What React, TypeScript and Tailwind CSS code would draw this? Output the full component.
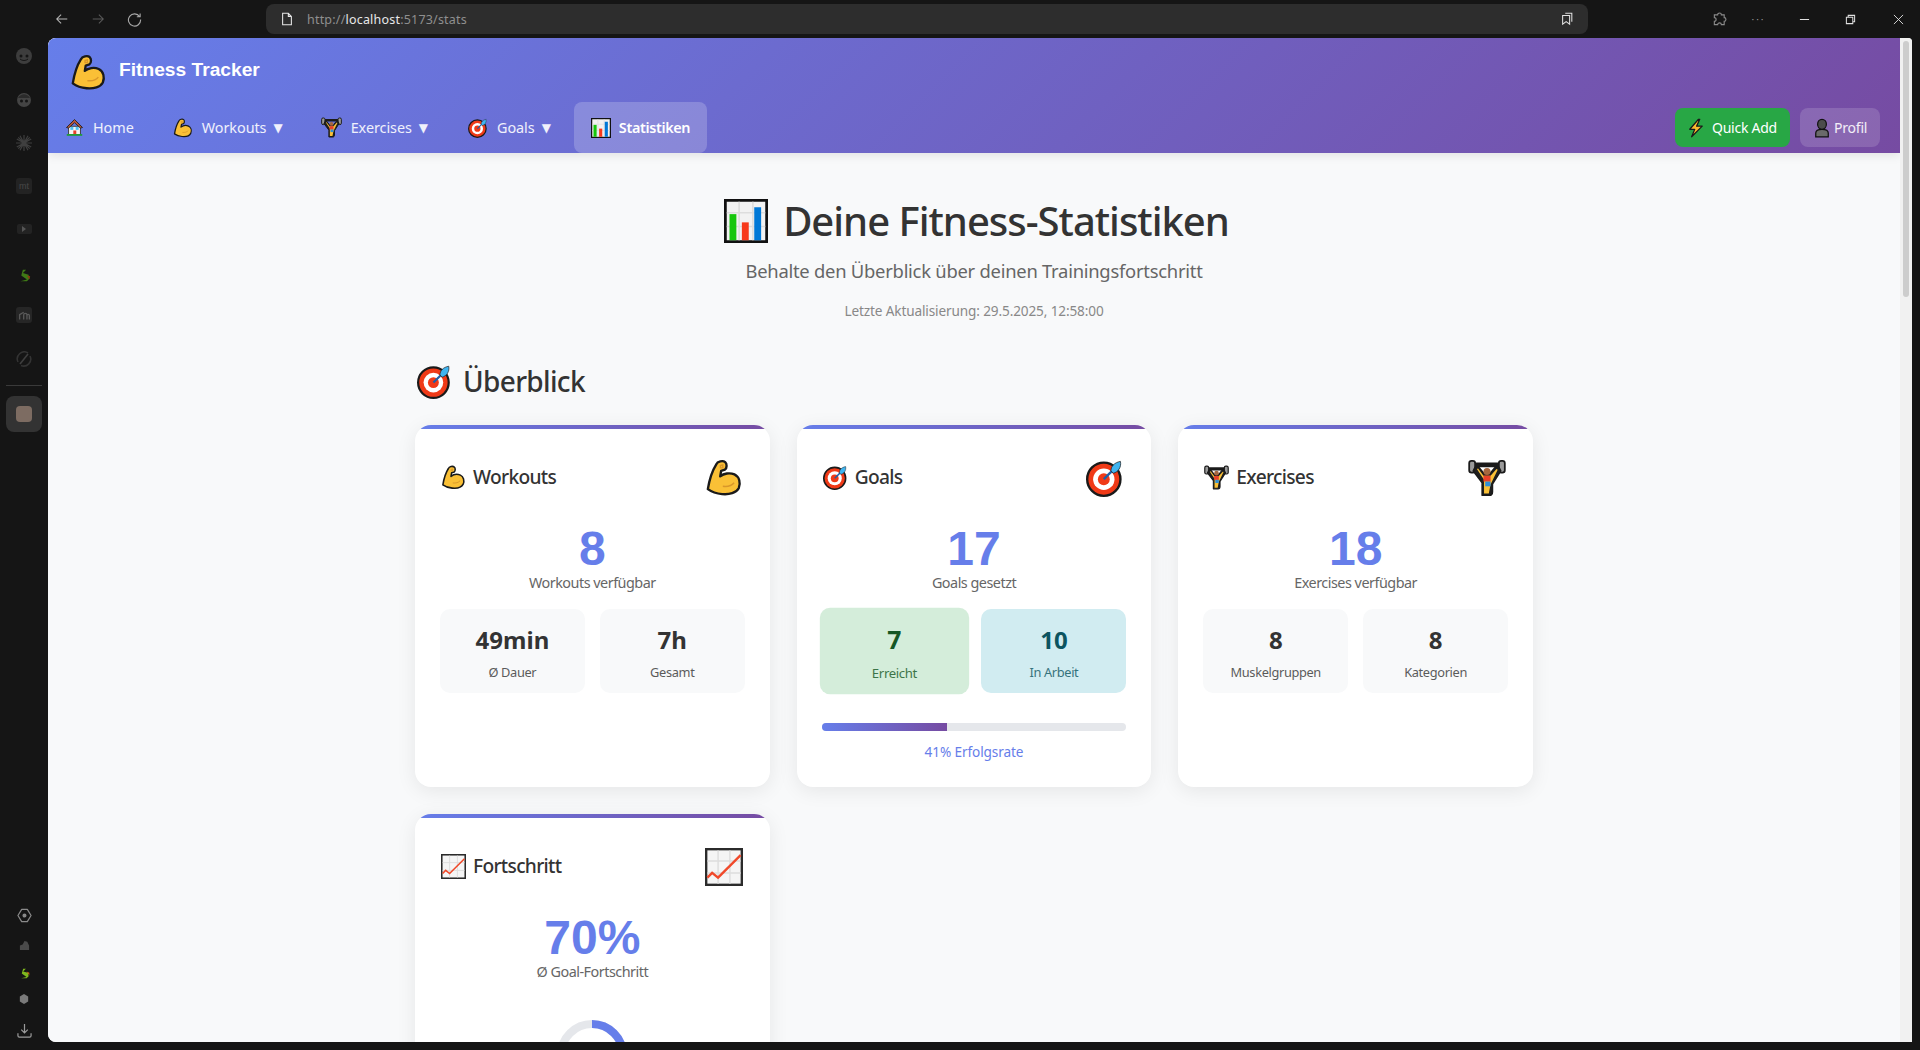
import type { ReactNode } from 'react';

const UI_FONT = "font-['Noto_Sans',sans-serif]";
const NUM_FONT = "font-['Liberation_Sans',Arial,sans-serif]";

/* ---------- emoji, drawn because no colour emoji font is available ---------- */

function Muscle({ className }: { className: string }) {
  return (
    <svg viewBox="0 0 32 32" className={className}>
      <path
        d="M9.500 4.500C10.500 2 15 1 17 2.600c1.600 1.400 1.600 5-.2 6.400l-3.200 1-.8 4.600c3-2.400 8-3.400 12-1.600 4.200 2 5.400 7.200 3.600 11.600-2 4-8 5.600-14 5-4.600-.4-9-2-12-4.200C3.600 18 6 10 9.500 4.500Z"
        fill="#fac036"
        stroke="#1a1a1a"
        strokeWidth="2"
        strokeLinejoin="round"
      />
      <path d="M13 5.500l2-.5v2.500h-2zM15 23c4 .5 7.500-.5 9.500-3" fill="none" stroke="#d9972a" strokeWidth="1.200" />
    </svg>
  );
}

function Target({ className }: { className: string }) {
  return (
    <svg viewBox="0 0 32 32" className={className}>
      <circle cx="15" cy="17" r="14" fill="#f03a17" stroke="#1a1a1a" strokeWidth="2" />
      <circle cx="15" cy="17" r="9" fill="#fff" />
      <circle cx="15" cy="17" r="5" fill="#f03a17" />
      <path d="M15 17 25 7" stroke="#1d5fa8" strokeWidth="2" />
      <path d="M21 10c0-4 3-7 8-8 1 5-2 9-6 10z" fill="#3fb4f0" stroke="#1a1a1a" strokeWidth=".6" />
    </svg>
  );
}

function Lifter({ className }: { className: string }) {
  return (
    <svg viewBox="0 0 32 32" className={className}>
      <path d="M4 5h24" stroke="#1a1a1a" strokeWidth="4" />
      <rect x="1" y="1.500" width="5" height="10" rx="2" fill="#9a9a9a" stroke="#1a1a1a" strokeWidth="1.500" />
      <rect x="26" y="1.500" width="5" height="10" rx="2" fill="#9a9a9a" stroke="#1a1a1a" strokeWidth="1.500" />
      <path d="M6 7 4.500 10 12 20v10.500h6c2 0 2.500-1.500 2.500-3V21L27.500 10 26 7l-3 0-4.500 5.500h-5L9 7z" fill="#1f1f1f" stroke="#1a1a1a" strokeWidth="1.500" strokeLinejoin="round" />
      <path d="M7.500 8.500 13.500 17.500v11.500h4l1.500-7.500L25 9l-1 -.5-5 5.500h-6L8.500 8z" fill="#fac036" />
      <circle cx="16" cy="10.500" r="3" fill="#a5673f" />
      <rect x="13" y="14" width="6" height="5" fill="#e8402a" />
      <rect x="14.500" y="19" width="4.500" height="4" fill="#2f8fd8" />
    </svg>
  );
}

function BarChart({ className }: { className: string }) {
  return (
    <svg viewBox="0 0 32 32" className={className}>
      <rect x="1" y="1" width="30" height="30" fill="#f2f2f2" stroke="#111" strokeWidth="2" />
      <path d="M2 10h28M2 20h28M11 2v28M21 2v28" stroke="#ddd" strokeWidth="1.200" />
      <rect x="4" y="11" width="5" height="19" fill="#16c60c" />
      <rect x="13" y="17" width="5" height="13" fill="#f7391b" />
      <rect x="22" y="6" width="5" height="24" fill="#0078d7" />
    </svg>
  );
}

function TrendChart({ className }: { className: string }) {
  return (
    <svg viewBox="0 0 32 32" className={className}>
      <rect x="1" y="1" width="30" height="30" fill="#f5f5f5" stroke="#2b2b2b" strokeWidth="2" />
      <path d="M2 11h28M2 21h28M11 2v28M21 2v28" stroke="#ddd" strokeWidth="1.200" />
      <path d="M2 25l4-4 5 4L30 6" fill="none" stroke="#f0492a" strokeWidth="2" />
    </svg>
  );
}

function House({ className }: { className: string }) {
  return (
    <svg viewBox="0 0 32 32" className={className}>
      <path d="M6 14h20v14H6z" fill="#f4f4f4" stroke="#333" strokeWidth="1.500" />
      <path d="M2.500 16 16 2.500 29.500 16 26 17 16 8 6 17z" fill="#b5533c" stroke="#222" strokeWidth="1.500" strokeLinejoin="round" />
      <rect x="9" y="15" width="5" height="5" fill="#4fc3f7" />
      <rect x="18" y="15" width="5" height="5" fill="#4fc3f7" />
      <rect x="14" y="21" width="5" height="7" fill="#e8402a" />
      <rect x="3" y="27" width="26" height="3" fill="#1f9e3a" />
    </svg>
  );
}

function Bolt({ className }: { className: string }) {
  return (
    <svg viewBox="0 0 32 32" className={className}>
      <path d="M20 2 6 18h8L9 30l17-17h-9l5-11z" fill="#fdb92e" stroke="#1a1a1a" strokeWidth="2" strokeLinejoin="round" />
    </svg>
  );
}

function Person({ className }: { className: string }) {
  return (
    <svg viewBox="0 0 32 32" className={className}>
      <path d="M6 30v-6c0-4 4-6 10-6s10 2 10 6v6z" fill="#6a6a6a" stroke="#111" strokeWidth="2" />
      <ellipse cx="16" cy="10" rx="7" ry="8" fill="#4c4c4c" stroke="#111" strokeWidth="2" />
    </svg>
  );
}

/* ---------- browser chrome ---------- */

function Sidebar() {
  return (
    <div className="w-12 shrink-0 flex flex-col items-center">
      <div className="flex flex-col items-center text-[#4a4a4a] pt-[10px]">
        <svg viewBox="0 0 16 16" className="w-4 h-4 mb-[28px]">
          <circle cx="8" cy="8" r="8" fill="#3d3d3d" />
          <circle cx="5" cy="8" r="1.500" fill="#151515" />
          <circle cx="11" cy="8" r="1.500" fill="#151515" />
          <path d="M4 11c2 2 6 2 8 0" stroke="#151515" fill="none" />
        </svg>
        <svg viewBox="0 0 16 16" className="w-4 h-4 mb-[27px]">
          <circle cx="8" cy="8" r="7" fill="#444" />
          <path d="M2 6c3-5 9-5 12 0z" fill="#2b2b2b" />
          <circle cx="5.500" cy="9" r="1.500" fill="#151515" />
          <circle cx="10.500" cy="9" r="1.500" fill="#151515" />
        </svg>
        <svg viewBox="0 0 16 16" className="w-4 h-4 mb-[27px]" stroke="#3f3f3f" strokeWidth="1.200">
          <path d="M8 0v16M0 8h16M2.300 2.300l11.400 11.400M13.700 2.300 2.300 13.700M4 .8l8 14.400M12 .8 4 15.200M.8 4l14.400 8M15.200 4 .8 12" />
        </svg>
        <div className="w-4 h-4 mb-[30px] rounded-[3px] bg-[#232323] text-[9px] leading-4 text-center text-[#484848] font-['Liberation_Sans',sans-serif]">
          mt
        </div>
        <div className="w-[15px] h-[10px] mb-[35px] rounded-[2px] bg-[#232323] flex items-center justify-center">
          <div className="border-l-[4px] border-y-[3px] border-l-[#555] border-y-transparent" />
        </div>
        <svg viewBox="0 0 16 16" className="w-[13px] h-[13px] mb-[25px]">
          <path d="M6 1h4L6 5l7 2 1 5-3 3H3l8-2-7-5z" fill="#3f7a16" />
          <path d="M11 8l4 1-1 4z" fill="#8a3a14" />
        </svg>
        <div className="w-4 h-4 mb-[28px] rounded-[3px] bg-[#262626] flex items-center justify-center">
          <svg viewBox="0 0 16 16" className="w-[13px] h-[13px]" fill="none" stroke="#595959" strokeWidth="1.600">
            <path d="M2 13V7l5-3M7 13V7c0-2 4-2 4 0v6M11 8c0-2 3-2 3 0v5" />
          </svg>
        </div>
        <svg viewBox="0 0 16 16" className="w-4 h-4" fill="none" stroke="#333" strokeWidth="1.600">
          <path d="M2 11A7 7 0 0 1 12 2" />
          <path d="M14 5a7 7 0 0 1-9 9.500" />
          <path d="M4 13 12 3" stroke="#3f3f3f" />
        </svg>
      </div>
      <div className="w-9 h-px bg-[#3a3a3a] mt-[18px]" />
      <div className="w-9 h-9 mt-[10px] rounded-lg bg-[#333] flex items-center justify-center">
        <div className="w-4 h-4 rounded-[4px] bg-[#7d6c62]" />
      </div>
      <div className="mt-auto flex flex-col items-center pb-[4px]">
        <svg viewBox="0 0 16 16" className="w-[15px] h-[15px] mb-[17px]" fill="none" stroke="#8a8a8a" strokeWidth="1.300">
          <path d="M5 1.500h6L15 8l-4 6.500H5L1 8z" strokeLinejoin="round" />
          <circle cx="8" cy="8" r="1.500" fill="#8a8a8a" />
        </svg>
        <svg viewBox="0 0 12 12" className="w-[11px] h-[11px] mb-[17px]">
          <path d="M1 11V6l3-1 2-4 3 1 2 4v5z" fill="#4a4a4a" />
        </svg>
        <svg viewBox="0 0 16 16" className="w-[11px] h-[11px] mb-[15px]">
          <path d="M6 1h4L6 5l7 2 1 5-3 3H3l8-2-7-5z" fill="#7fb81e" />
          <path d="M11 5l4 2v4z" fill="#d06a12" />
        </svg>
        <svg viewBox="0 0 12 12" className="w-[10px] h-[10px] mb-[19px]">
          <path d="M6 0l5 3v6l-5 3-5-3V3z" fill="#7a7a7a" />
        </svg>
        <svg viewBox="0 0 16 16" className="w-[15px] h-[15px]" fill="none" stroke="#9a9a9a" strokeWidth="1.300">
          <path d="M8 1v9M4.500 7 8 10.500 11.500 7M1 11v2.500c0 .8.700 1.500 1.500 1.500h11c.8 0 1.500-.7 1.500-1.500V11" />
        </svg>
      </div>
    </div>
  );
}

function TopBar() {
  return (
    <div className="h-[38px] shrink-0 flex items-center text-[#9a9a9a]">
      <div className="w-12 shrink-0" />
      <svg viewBox="0 0 16 16" className="w-[14px] h-[14px] ml-[7px]" fill="none" stroke="#b5b5b5" strokeWidth="1.200">
        <path d="M14 8H2M7 3 2 8l5 5" />
      </svg>
      <svg viewBox="0 0 16 16" className="w-[14px] h-[14px] ml-[22px]" fill="none" stroke="#5a5a5a" strokeWidth="1.200">
        <path d="M2 8h12M9 3l5 5-5 5" />
      </svg>
      <svg viewBox="0 0 16 16" className="w-[15px] h-[15px] ml-[22px]" fill="none" stroke="#a8a8a8" strokeWidth="1.200">
        <path d="M13.500 5A6.500 6.500 0 1 0 14.500 8M14 1.500V5h-3.500" />
      </svg>
      <div className={`w-[1322px] h-[30px] ml-[124px] rounded-lg bg-[#2d2d2d] flex items-center pl-[14px] pr-[14px] ${UI_FONT}`}>
        <svg viewBox="0 0 16 16" className="w-[14px] h-[14px]" fill="none" stroke="#e8e8e8" strokeWidth="1.200">
          <path d="M3 1.500h6.500L13 5v9.500H3zM9.500 1.500V5H13" />
        </svg>
        <span className="ml-[13px] pt-[2px] text-[12.500px] tracking-[0.2px] text-[#8f8f8f]">
          http://<span className="text-[#e8e8e8]">localhost</span>:5173/stats
        </span>
        <svg viewBox="0 0 16 16" className="w-[14px] h-[14px] ml-auto" fill="none" stroke="#e0e0e0" strokeWidth="1.200">
          <path d="M3 4h8v10l-4-3-4 3zM6 1.500h7.500V11" />
        </svg>
      </div>
      <svg viewBox="0 0 16 16" className="w-[15px] h-[15px] ml-[124px]" fill="none" stroke="#8a8a8a" strokeWidth="1.200">
        <path d="M6 3c0-2.500 4-2.500 4 0h3v3c2.500 0 2.500 4 0 4v3.500H10c0-2.500-4-2.500-4 0H2.500V10c2.500 0 2.500-4 0-4V3z" />
      </svg>
      <span className="ml-[24px] w-[13px] text-[11px] leading-none tracking-[1px] text-[#9a9a9a] font-['Liberation_Sans',sans-serif]">···</span>
      <svg viewBox="0 0 12 12" className="w-[11px] h-[11px] ml-[35px]" stroke="#e0e0e0" strokeWidth="1.100">
        <path d="M1 6h10" />
      </svg>
      <svg viewBox="0 0 12 12" className="w-[11px] h-[11px] ml-[35px]" fill="none" stroke="#e0e0e0" strokeWidth="1.100">
        <path d="M1.500 3.500h7v7h-7zM3.500 3.500v-2h7v7h-2" />
      </svg>
      <svg viewBox="0 0 12 12" className="w-[11px] h-[11px] ml-[37px]" stroke="#e0e0e0" strokeWidth="1">
        <path d="M1 1l10 10M11 1 1 11" />
      </svg>
    </div>
  );
}

/* ---------- app ---------- */

const NAV = [
  { label: 'Home', icon: <House className="w-[19px] h-[19px]" />, caret: false, pad: 'mr-[7px]' },
  { label: 'Workouts', icon: <Muscle className="w-[20px] h-[20px]" />, caret: true, pad: 'mr-[6px]' },
  { label: 'Exercises', icon: <Lifter className="w-[21px] h-[21px]" />, caret: true, pad: 'mr-[8px]' },
  { label: 'Goals', icon: <Target className="w-[20px] h-[20px]" />, caret: true, pad: 'mr-[7px]' },
];

function Header() {
  return (
    <header className={`shrink-0 h-[115px] bg-[linear-gradient(135deg,#667eea_0%,#764ba2_100%)] shadow-[0_2px_10px_rgba(0,0,0,0.1)] ${UI_FONT}`}>
      <div className="h-[64px] pl-[22px] pt-[16px] flex">
        <Muscle className="w-[37px] h-[37px]" />
        <span className={`ml-[12px] pt-[2px] text-[19.200px] leading-[28px] font-bold text-white ${NUM_FONT}`}>Fitness Tracker</span>
      </div>
      <div className="h-[51px] pl-px pr-[20px] flex justify-between">
        <nav className="flex">
          {NAV.map((item) => (
            <a key={item.label} className={`flex items-center px-4 text-[14.4px] tracking-[-0.05px] text-white/90 ${item.pad}`}>
              {item.icon}
              <span className="ml-[9px]">{item.label}</span>
              {item.caret && <span className="ml-[7px] text-[12px] font-['DejaVu_Sans',sans-serif]">▼</span>}
            </a>
          ))}
          <a className="flex items-center px-[17px] rounded-lg bg-white/20 text-[14.4px] font-semibold tracking-[-0.35px] text-white">
            <BarChart className="w-[20px] h-[20px]" />
            <span className="ml-2">Statistiken</span>
          </a>
        </nav>
        <div className="flex pt-[6px] gap-[10px] h-[45px]">
          <button className="flex items-center w-[115px] pl-[11px] rounded-lg bg-[#28a745] text-[14px] tracking-[-0.25px] text-white">
            <Bolt className="w-[20px] h-[20px]" />
            <span className="ml-[6px]">Quick Add</span>
          </button>
          <button className="flex items-center w-20 pl-[12px] rounded-lg bg-white/15 text-[14px] tracking-[-0.2px] text-white/90">
            <Person className="w-[20px] h-[20px]" />
            <span className="ml-[2px]">Profil</span>
          </button>
        </div>
      </div>
    </header>
  );
}

function MiniStat({ value, label, tone = 'plain' }: { value: string; label: string; tone?: 'plain' | 'success' | 'info' }) {
  const tones = {
    plain: 'bg-[#f8f9fa] text-[#333]',
    success: 'bg-[#d4edda] text-[#155724] scale-[1.03]',
    info: 'bg-[#d1ecf1] text-[#0c5460]',
  };
  return (
    <div className={`h-[84px] rounded-[10px] flex flex-col items-center pt-[15px] ${tones[tone]}`}>
      <div className="text-[24px] leading-[32px] font-bold">{value}</div>
      <div className="mt-[7px] text-[12.800px] leading-[18px] tracking-[-0.35px] opacity-80">{label}</div>
    </div>
  );
}

function StatCard({
  title,
  icon,
  bigIcon,
  value,
  caption,
  children,
}: {
  title: string;
  icon: ReactNode;
  bigIcon: ReactNode;
  value: string;
  caption: string;
  children: ReactNode;
}) {
  return (
    <div className="h-[362px] rounded-[16px] bg-white overflow-hidden shadow-[0_4px_20px_rgba(0,0,0,0.08)]">
      <div className="h-1 bg-[linear-gradient(90deg,#667eea,#764ba2)]" />
      <div className="px-[25px] pt-[31px]">
        <div className="h-[35px] flex items-center">
          <div className="w-[25px] ml-px">{icon}</div>
          <h3 className="ml-[7px] text-[19.200px] font-medium tracking-[-0.7px] text-[#333]">{title}</h3>
          <div className="ml-auto mr-[2px]">{bigIcon}</div>
        </div>
        <div className={`mt-[29px] text-center text-[48px] leading-[49px] font-bold text-[#667eea] ${NUM_FONT}`}>{value}</div>
        <div className="text-center text-[14.400px] leading-[20px] tracking-[-0.5px] text-[#666]">{caption}</div>
        {children}
      </div>
    </div>
  );
}

function Stats() {
  const small = 'w-[25px] h-[25px]';
  const big = 'w-[38px] h-[38px]';
  return (
    <div className="grid grid-cols-3 gap-[27px]">
      <StatCard title="Workouts" icon={<Muscle className={small} />} bigIcon={<Muscle className={big} />} value="8" caption="Workouts verfügbar">
        <div className="mt-[16px] grid grid-cols-2 gap-[15px]">
          <MiniStat value="49min" label="Ø Dauer" />
          <MiniStat value="7h" label="Gesamt" />
        </div>
      </StatCard>
      <StatCard title="Goals" icon={<Target className={small} />} bigIcon={<Target className={big} />} value="17" caption="Goals gesetzt">
        <div className="mt-[16px] grid grid-cols-2 gap-[15px]">
          <MiniStat value="7" label="Erreicht" tone="success" />
          <MiniStat value="10" label="In Arbeit" tone="info" />
        </div>
        <div className="mt-[30px] h-2 rounded-full bg-[#e5e7eb] overflow-hidden">
          <div className="h-full w-[41%] bg-[linear-gradient(90deg,#667eea,#764ba2)]" />
        </div>
        <div className="mt-[11px] text-center text-[13.600px] leading-[20px] tracking-[-0.1px] text-[#667eea]">41% Erfolgsrate</div>
      </StatCard>
      <StatCard title="Exercises" icon={<Lifter className={small} />} bigIcon={<Lifter className={big} />} value="18" caption="Exercises verfügbar">
        <div className="mt-[16px] grid grid-cols-2 gap-[15px]">
          <MiniStat value="8" label="Muskelgruppen" />
          <MiniStat value="8" label="Kategorien" />
        </div>
      </StatCard>
      <StatCard title="Fortschritt" icon={<TrendChart className={small} />} bigIcon={<TrendChart className={big} />} value="70%" caption="Ø Goal-Fortschritt">
        <svg viewBox="0 0 70 70" className="mt-[38px] mx-auto w-[70px] h-[70px]" fill="none" strokeWidth="8">
          <circle cx="35" cy="35" r="31" stroke="#e5e7eb" />
          <circle cx="35" cy="35" r="31" stroke="#667eea" strokeDasharray="136.300 194.800" transform="rotate(-90 35 35)" />
        </svg>
      </StatCard>
    </div>
  );
}

export default function App() {
  return (
    <div className="w-[1920px] h-[1050px] overflow-hidden bg-[#151515] flex flex-col">
      <TopBar />
      <div className="flex-1 min-h-0 flex pr-2 pb-2">
        <Sidebar />
        <div className="flex-1 min-w-0 flex rounded-l-lg rounded-tr-[4px] overflow-hidden bg-white">
          <div className="flex-1 min-w-0 flex flex-col bg-[#f8f9fa] overflow-hidden">
            <Header />
            <main className={`w-[1118px] mx-auto ${UI_FONT}`}>
              <div className="mt-[40px] flex items-center justify-center pl-[5px]">
                <BarChart className="w-[44px] h-[44px]" />
                <h1 className="ml-[15px] text-[40px] leading-[56px] font-medium tracking-[-1px] text-[#333]">Deine Fitness-Statistiken</h1>
              </div>
              <p className="mt-[9px] text-center text-[18.400px] leading-[26px] tracking-[-0.25px] text-[#666]">
                Behalte den Überblick über deinen Trainingsfortschritt
              </p>
              <p className="mt-[17px] text-center text-[13.600px] leading-[20px] tracking-[-0.13px] text-[#888]">
                Letzte Aktualisierung: 29.5.2025, 12:58:00
              </p>
              <div className="mt-[40px] flex items-center pl-[2px]">
                <Target className="w-[35px] h-[35px]" />
                <h2 className="ml-[11px] text-[28px] leading-[40px] font-medium tracking-[-0.65px] text-[#333]">Überblick</h2>
              </div>
              <div className="mt-[24px]">
                <Stats />
              </div>
            </main>
          </div>
          <div className="w-3 shrink-0 bg-[#f1f1f1] pt-[3px] pl-[3px]">
            <div className="w-[6px] h-[256px] rounded-full bg-[#cdcdcd]" />
          </div>
        </div>
      </div>
    </div>
  );
}
